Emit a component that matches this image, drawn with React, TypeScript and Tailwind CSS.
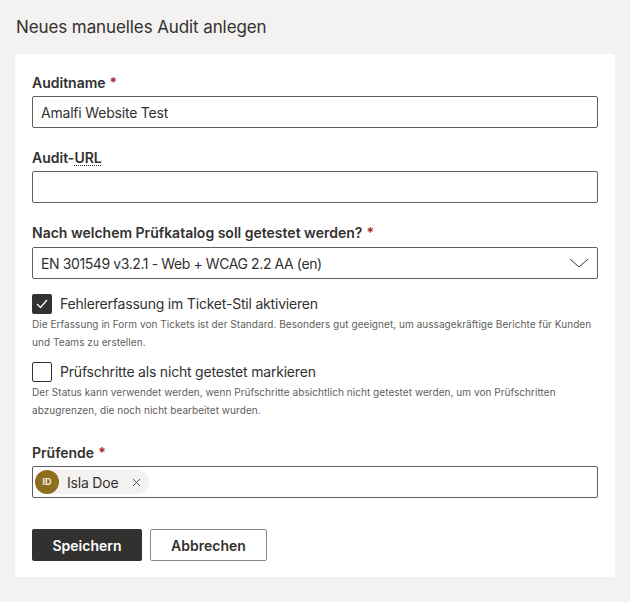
import { X } from "lucide-react";

function Req() {
  return <span className="ml-1 text-[#a4262c]">*</span>;
}

export default function App() {
  return (
    <div className="min-h-[602px] bg-[#f3f2f1] px-[15px] pb-6 pt-[14px] font-['Inter',sans-serif] text-[#323130]">
      <h1 className="mb-[14px] pl-[1px] text-[17px] leading-[26px] tracking-[-0.1px]">Neues manuelles Audit anlegen</h1>

      <div className="rounded-[4px] bg-white px-[17px] pb-[16px] pt-[19px]">
        {/* Auditname */}
        <label className="block text-[14px] font-semibold leading-[20px]">
          Auditname
          <Req />
        </label>
        <div className="mt-[3px] flex h-[32px] items-center rounded-[2px] border border-[#605e5c] px-[8px] text-[14px] tracking-[-0.2px]">
          Amalfi Website Test
        </div>

        {/* Audit-URL */}
        <label className="mt-[20px] block text-[14px] font-semibold leading-[20px]">
          Audit-
          <abbr className="underline decoration-dotted decoration-1 underline-offset-2">URL</abbr>
        </label>
        <div className="mt-[3px] h-[32px] rounded-[2px] border border-[#605e5c]" />

        {/* Prüfkatalog */}
        <label className="mt-[20px] block text-[14px] font-semibold leading-[20px]">
          Nach welchem Prüfkatalog soll getestet werden?
          <Req />
        </label>
        <div className="mt-[4px] flex h-[32px] items-center justify-between rounded-[2px] border border-[#605e5c] pl-[8px] pr-[8px] text-[14px] tracking-[-0.4px]">
          <span>EN 301549 v3.2.1 - Web + WCAG 2.2 AA (en)</span>
          <svg width="20" height="10" viewBox="0 0 20 10" fill="none" stroke="#323130" strokeWidth="1">
            <path d="M1 1l9 8 9-8" />
          </svg>
        </div>

        {/* Checkbox 1 */}
        <div className="mt-[15px] flex items-center gap-[8px]">
          <span className="flex h-[20px] w-[20px] items-center justify-center rounded-[2px] bg-[#323130]">
            <svg width="12" height="10" viewBox="0 0 12 10" fill="none" stroke="white" strokeWidth="1.3">
              <path d="M1 5l3.5 3.5L11 1" />
            </svg>
          </span>
          <span className="text-[14px] leading-[20px] tracking-[-0.2px]">Fehlererfassung im Ticket-Stil aktivieren</span>
        </div>
        <p className="mt-[1px] text-[10px] leading-[18px] tracking-[0.05px] text-[#605e5c]">
          Die Erfassung in Form von Tickets ist der Standard. Besonders gut geeignet, um aussagekräftige Berichte für Kunden und Teams zu erstellen.
        </p>

        {/* Checkbox 2 */}
        <div className="mt-[11px] flex items-center gap-[8px]">
          <span className="h-[20px] w-[20px] rounded-[2px] border border-[#323130]" />
          <span className="text-[14px] leading-[20px] tracking-[-0.2px]">Prüfschritte als nicht getestet markieren</span>
        </div>
        <p className="mt-[1px] text-[10px] leading-[18px] tracking-[0.05px] text-[#605e5c]">
          Der Status kann verwendet werden, wenn Prüfschritte absichtlich nicht getestet werden, um von Prüfschritten abzugrenzen, die noch nicht bearbeitet wurden.
        </p>

        {/* Prüfende */}
        <label className="mt-[24px] block text-[14px] font-semibold leading-[20px]">
          Prüfende
          <Req />
        </label>
        <div className="mt-[3px] flex h-[32px] items-center rounded-[2px] border border-[#605e5c] px-[2px]">
          <span className="flex h-[24px] items-center rounded-full bg-[#f3f2f1] pr-[6px]">
            <span className="flex h-[24px] w-[24px] items-center justify-center rounded-full bg-[#8f6d1f] text-[9px] font-semibold text-white">
              ID
            </span>
            <span className="ml-[8px] text-[14px] tracking-[-0.2px]">Isla Doe</span>
            <X className="ml-[12px] h-[13px] w-[13px]" strokeWidth={1.5} />
          </span>
        </div>

        {/* Buttons */}
        <div className="mt-[31px] flex gap-[8px]">
          <button className="h-[32px] w-[110px] rounded-[2px] bg-[#323130] text-[14px] font-semibold text-white">
            Speichern
          </button>
          <button className="h-[32px] w-[117px] rounded-[2px] border border-[#8a8886] bg-white text-[14px] font-semibold">
            Abbrechen
          </button>
        </div>
      </div>
    </div>
  );
}
